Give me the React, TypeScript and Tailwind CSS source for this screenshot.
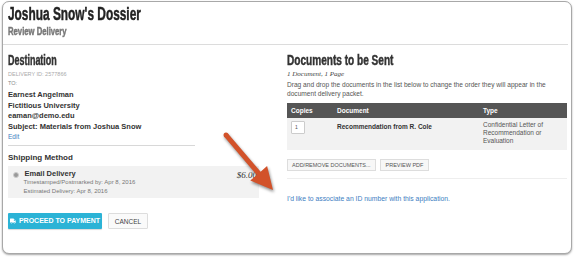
import { FaTruck } from "react-icons/fa";

// headings in the original use a heavy condensed grotesque; squeeze and thicken Liberation Sans Bold
const squeeze = "inline-block origin-left whitespace-nowrap [-webkit-text-stroke:0.45px_currentColor]";

function Arrow() {
  return (
    <svg
      className="absolute left-0 top-0 pointer-events-none drop-shadow-[1px_2px_1.5px_rgba(0,0,0,0.45)]"
      width="574"
      height="258"
      viewBox="0 0 574 258"
    >
      <polygon
        points="227.9,133.4 260.6,171.7 267.1,166.1 273,190 250.3,180.5 256.8,174.9 224.1,136.6"
        fill="#d2522a"
      />
      <circle cx="226" cy="135" r="2.5" fill="#d2522a" />
    </svg>
  );
}

export default function App() {
  return (
    <div
      className="relative w-[574px] h-[258px] bg-white overflow-hidden pt-[1px] pl-[2px]"
      style={{ fontFamily: '"Liberation Sans", Arial, sans-serif' }}
    >
      <div className="w-[570px] h-[253px] rounded-[7px] border border-[#a8a8a8] shadow-[0_1px_2px_rgba(0,0,0,0.35)] bg-white">
        {/* header */}
        <div className="pl-[5px] pt-[2px]">
          <h1 className="text-[18px] leading-[21px] font-bold text-[#222]">
            <span className={`${squeeze} scale-x-[0.66]`}>Joshua Snow's Dossier</span>
          </h1>
          <p className="text-[11px] leading-[12px] font-bold text-[#777]">
            <span className={`${squeeze} scale-x-[0.7] [-webkit-text-stroke:0.25px_currentColor]`}>Review Delivery</span>
          </p>
        </div>
        <div className="mt-[7px] mr-[3px] h-px bg-[#dcdcdc]" />

        <div className="flex pl-[5px] pr-[3px] pt-[8px]">
          {/* left column */}
          <div className="w-[251px] text-[#333]">
            <h2 className="text-[14px] leading-[15px] font-bold text-[#333]">
              <span className={`${squeeze} scale-x-[0.64] [-webkit-text-stroke:0.35px_currentColor]`}>Destination</span>
            </h2>
            <p className="text-[5.5px] leading-[8px] mt-[2px] text-[#aaa] uppercase">Delivery ID: 2577866</p>
            <p className="text-[5.5px] leading-[8px] mt-[1px] text-[#888] uppercase">To:</p>
            <div className="mt-[3px] text-[7.5px] leading-[10.6px] font-bold text-[#333]">
              <p>Earnest Angelman</p>
              <p>Fictitious University</p>
              <p>eaman@demo.edu</p>
              <p>Subject: Materials from Joshua Snow</p>
            </div>
            <p className="text-[6.5px] leading-[9px] text-[#3d7ec2]">Edit</p>
            <div className="w-[187px] h-px bg-[#d8d8d8] mt-[4px]" />
            <h3 className="text-[8px] leading-[10px] font-bold mt-[7px] text-[#333]">Shipping Method</h3>
            <div className="mt-[3px] h-[32px] bg-[#f2f2f2] flex pl-[5px] pr-[2px] pt-[3px]">
              <span className="mt-[3px] w-[3.5px] h-[3.5px] rounded-full bg-[#999] border border-[#ccc] box-content" />
              <div className="ml-[6px] flex-1">
                <p className="text-[7.5px] leading-[9px] font-bold text-[#333]">Email Delivery</p>
                <p className="text-[6px] leading-[8.5px] text-[#777] -ml-[1px]">Timestamped/Postmarked by: Apr 8, 2016</p>
                <p className="text-[6px] leading-[8.5px] text-[#777] -ml-[1px]">Estimated Delivery: Apr 8, 2016</p>
              </div>
              <span
                className="text-[9px] leading-[10px] italic text-[#333] mt-[1px]"
                style={{ fontFamily: '"Liberation Serif", "Times New Roman", serif' }}
              >
                $6.00
              </span>
            </div>
            <div className="flex gap-[6px] mt-[15px]">
              <button className="w-[94px] h-[16px] bg-[#2bb3d6] rounded-[1px] text-white text-[7px] font-bold flex items-center justify-center gap-[3px] shadow-[0_1px_1px_rgba(0,0,0,0.15)]">
                <FaTruck className="w-[6px] h-[6px]" />
                PROCEED TO PAYMENT
              </button>
              <button className="w-[40px] h-[16px] bg-[#fafafa] border border-[#ddd] rounded-[1px] text-[#444] text-[6.5px] flex items-center justify-center">
                CANCEL
              </button>
            </div>
          </div>

          {/* right column */}
          <div className="ml-[28px] w-[280px]">
            <h2 className="text-[14px] leading-[15px] font-bold text-[#333]">
              <span className={`${squeeze} scale-x-[0.72] [-webkit-text-stroke:0.35px_currentColor]`}>Documents to be Sent</span>
            </h2>
            <p
              className="text-[7px] leading-[10px] italic text-[#444] mt-[1px]"
              style={{ fontFamily: '"Liberation Serif", "Times New Roman", serif' }}
            >
              1 Document, 1 Page
            </p>
            <p className="text-[6.6px] leading-[8.5px] text-[#555] mt-[2px]">
              Drag and drop the documents in the list below to change the order they will appear in the document
              delivery packet.
            </p>
            <div className="mt-[5px]">
              <div className="flex h-[15px] items-center bg-[#555] text-white text-[6.5px] font-bold">
                <span className="w-[50px] pl-[4px]">Copies</span>
                <span className="w-[146px]">Document</span>
                <span>Type</span>
              </div>
              <div className="flex h-[32px] bg-[#f2f2f2] text-[6.5px] pt-[3px]">
                <div className="w-[50px] pl-[4px]">
                  <div className="w-[14px] h-[13px] bg-white border border-[#ccc] rounded-[1px] text-[5px] text-[#555] pl-[3px] pt-[2px]">
                    1
                  </div>
                </div>
                <span className="w-[146px] font-bold text-[#333] pt-[1px]">Recommendation from R. Cole</span>
                <span className="w-[78px] leading-[8.2px] text-[#555]">
                  Confidential Letter of Recommendation or Evaluation
                </span>
              </div>
            </div>
            <div className="flex gap-[4px] mt-[9px]">
              <button className="h-[12px] px-[4px] bg-[#f7f7f7] border border-[#ddd] text-[5.5px] text-[#555]">
                ADD/REMOVE DOCUMENTS...
              </button>
              <button className="h-[12px] px-[5px] bg-[#f7f7f7] border border-[#ddd] text-[5.5px] text-[#555]">
                PREVIEW PDF
              </button>
            </div>
            <div className="h-px bg-[#eee] mt-[7px]" />
            <p className="text-[6.8px] leading-[9px] text-[#3d7ec2] mt-[15px]">
              I'd like to associate an ID number with this application.
            </p>
          </div>
        </div>
      </div>
      <Arrow />
    </div>
  );
}
